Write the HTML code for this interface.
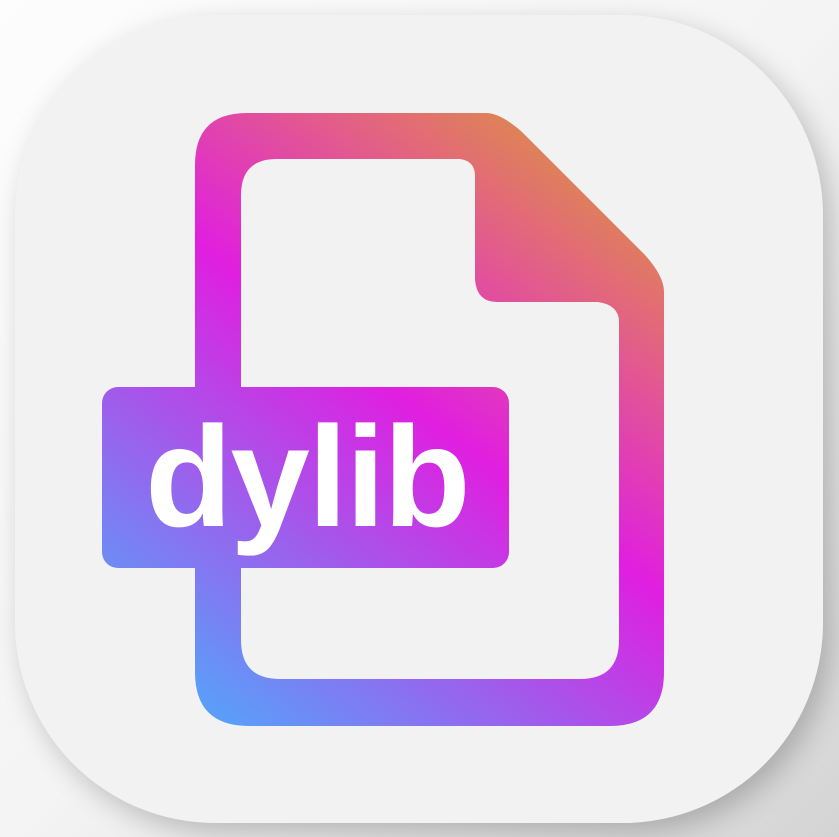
<!DOCTYPE html>
<html><head><style>
html,body{margin:0;padding:0;width:839px;height:837px;overflow:hidden;background:linear-gradient(135deg,#fdfdfd 0%,#f4f4f4 50%,#d4d4d4 100%);}
.sq{position:absolute;left:15px;top:15px;width:808px;height:808px;border-radius:200px;background:#f2f2f2;box-shadow:8px 10px 28px rgba(0,0,0,0.22);}
svg{position:absolute;left:0;top:0}
</style></head><body>
<div class="sq"></div>
<svg width="839" height="837" viewBox="0 0 839 837">
<defs>
<linearGradient id="g" gradientUnits="userSpaceOnUse" x1="200" y1="730" x2="664" y2="113">
<stop offset="0" stop-color="#52a6fa"/>
<stop offset="0.5" stop-color="#e01fe0"/>
<stop offset="0.78" stop-color="#e26a78"/>
<stop offset="1" stop-color="#d9a52a"/>
</linearGradient>
</defs>
<path fill="url(#g)" fill-rule="evenodd" d="M195,165 Q195,113 247,113 L487,113 Q502,114 522,132 L645,255 Q664,276 664,292 L664,672 Q664,726 610,726 L249,726 Q195,726 195,672 Z
M241,195 Q241,159 277,159 L460,159 Q475,161 475,176 L475,280 Q477,302 497,302 L598,302 Q619,305 619,322 L619,640 Q619,679 580,679 L280,679 Q241,679 241,640 Z"/>
<rect x="102" y="387" width="407" height="181" rx="16" fill="url(#g)"/>
<text x="145" y="526" fill="#fff" font-family="Liberation Sans, sans-serif" font-weight="bold" font-size="143" letter-spacing="-2">dylib</text>
</svg>
</body></html>
